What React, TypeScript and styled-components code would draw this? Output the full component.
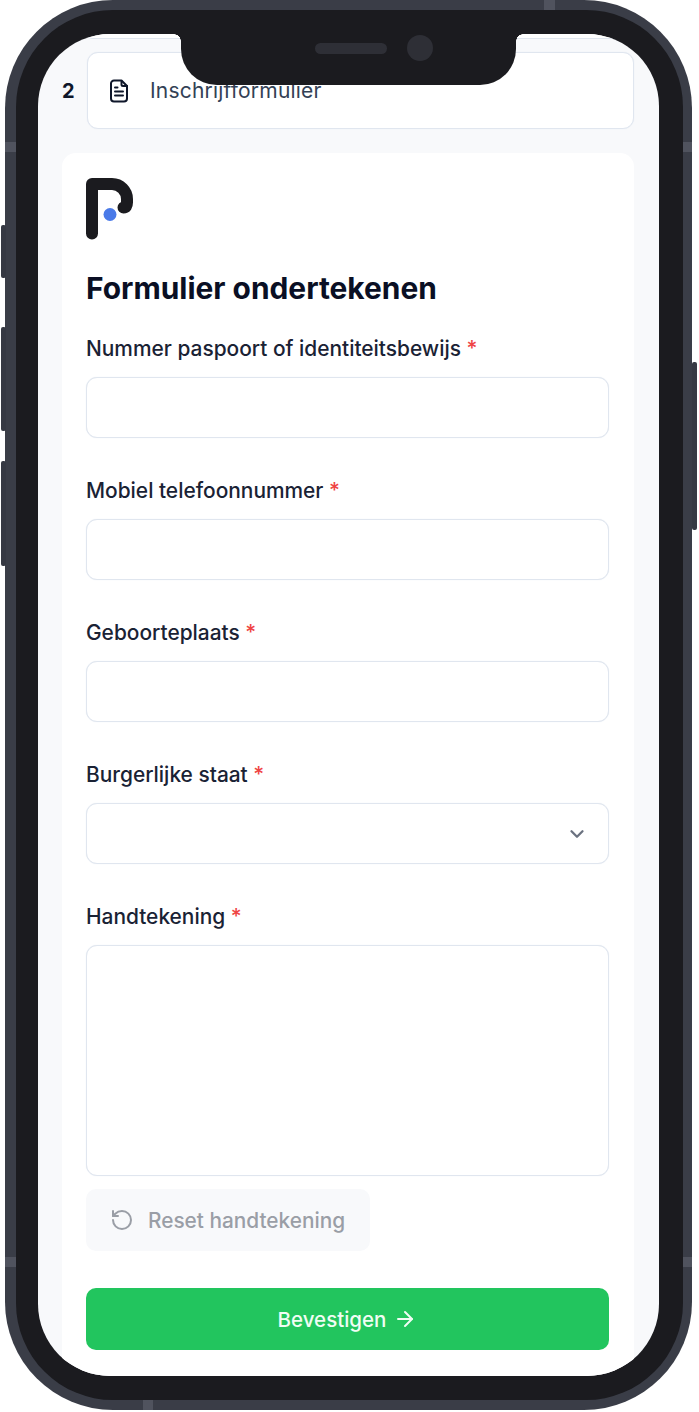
import React from "react";
import styled, { createGlobalStyle } from "styled-components";
import { ArrowRight, ChevronDown, RotateCcw } from "lucide-react";

const Global = createGlobalStyle`
  html, body { margin: 0; padding: 0; background: #fff; }
  body { font-family: "Inter", "Noto Sans", sans-serif; }
  * { box-sizing: border-box; }
`;

const Stage = styled.div`
  width: 699px;
  height: 1412px;
  padding: 0 7px 2px 5px;
  overflow: hidden;
`;
const Phone = styled.div`
  position: relative;
  height: 1410px;
  padding: 10px 9px 10px 11px;
  border-radius: 108px;
  background: #3a3d47;
`;
const SideButton = styled.span<{ $side: "left" | "right"; $top: number; $height: number }>`
  position: absolute;
  ${(p) => (p.$side === "left" ? "left: -4px;" : "right: -5px;")}
  top: ${(p) => p.$top}px;
  width: 5px;
  height: ${(p) => p.$height}px;
  border-radius: 2px;
  background: #363943;
`;
const Band = styled.span<{ $pos: string }>`
  position: absolute;
  ${(p) => p.$pos}
  background: #50535e;
`;
const Bezel = styled.div`
  position: relative;
  height: 100%;
  padding: 24px 24px 24px 22px;
  border-radius: 97px;
  background: #1b1b1f;
`;
const Notch = styled.div`
  position: absolute;
  z-index: 2;
  left: 165px;
  top: 24px;
  width: 335px;
  height: 51px;
  display: flex;
  align-items: flex-start;
  justify-content: center;
  gap: 20px;
  padding: 1px 0 0 50px;
  border-radius: 0 0 36px 36px;
  background: #1b1b1f;
  &::before, &::after {
    content: "";
    position: absolute;
    top: 0;
    width: 7px;
    height: 7px;
  }
  &::before {
    left: -7px;
    background: radial-gradient(circle at 0 100%, transparent 6.5px, #1b1b1f 7px);
  }
  &::after {
    right: -7px;
    background: radial-gradient(circle at 100% 100%, transparent 6.5px, #1b1b1f 7px);
  }
`;
const Speaker = styled.span`
  width: 72px;
  height: 11px;
  margin-top: 8px;
  border-radius: 6px;
  background: #2e2f36;
`;
const Camera = styled.span`
  width: 26px;
  height: 26px;
  border-radius: 50%;
  background: #2e2f36;
`;
const Screen = styled.div`
  height: 100%;
  overflow: hidden;
  padding: 0 25px 0 24px;
  border-radius: 72px;
  background: #f8f9fb;
`;
const PreviousEdge = styled.div`
  height: 5px;
  margin: 0 0 13px 25px;
  border: 1px solid #e0e6ef;
  border-top: none;
  border-radius: 0 0 10px 10px;
  background: #fff;
`;
const StepRow = styled.div`
  display: flex;
  align-items: center;
  height: 77px;
  margin-bottom: 24px;
`;
const StepNumber = styled.span`
  width: 25px;
  font-size: 20px;
  font-weight: 700;
  color: #0f172a;
`;
const StepCard = styled.div`
  flex: 1;
  height: 77px;
  display: flex;
  align-items: center;
  gap: 21px;
  padding: 0 0 0 21px;
  border: 1px solid #e0e6ef;
  border-radius: 11px;
  box-shadow: 0 0 1px #e2e8f0;
  background: #fff;
`;
const DocIcon = styled.svg`
  display: block;
  width: 20px;
  height: 24px;
  flex: none;
`;
const StepTitle = styled.span`
  font-size: 21px;
  font-weight: 400;
  letter-spacing: 0.2px;
  color: #334155;
`;
const FormCard = styled.div`
  height: 1300px;
  padding: 25px 25px 0 24px;
  border-radius: 14px 14px 0 0;
  background: #fff;
`;
const Logo = styled.svg`
  display: block;
  width: 48px;
  height: 62px;
`;
const Title = styled.h1`
  margin: 28px 0 27px;
  font-size: 29.9px;
  line-height: 40px;
  font-weight: 700;
  color: #0a0f24;
`;
const Field = styled.div`
  margin-bottom: 39px;
`;
const Label = styled.label`
  display: block;
  height: 42px;
  font-size: 20.9px;
  line-height: 28px;
  font-weight: 500;
  color: #1a2234;
`;
const Star = styled.span`
  color: #ef4444;
`;
const Input = styled.div<{ $height?: number }>`
  height: ${(p) => p.$height ?? 61}px;
  display: flex;
  align-items: center;
  justify-content: flex-end;
  padding-right: 20px;
  border: 1px solid #e0e6ef;
  border-radius: 11px;
  box-shadow: 0 0 1px #e2e8f0;
  background: #fff;
  color: #6b7280;
`;
const ResetButton = styled.button`
  display: flex;
  align-items: center;
  gap: 14px;
  width: 284px;
  height: 62px;
  margin: -26px 0 37px;
  padding: 0 0 0 24px;
  border: none;
  border-radius: 10px;
  background: #f8f9fb;
  font: 500 20.8px "Inter", sans-serif;
  color: #9a9ea6;
`;
const SubmitButton = styled.button`
  display: flex;
  align-items: center;
  justify-content: center;
  gap: 7px;
  width: 100%;
  height: 62px;
  border: none;
  border-radius: 10px;
  background: #22c55e;
  font: 500 20.5px "Inter", sans-serif;
  color: #f0fdf4;
`;

const fields = ["Nummer paspoort of identiteitsbewijs", "Mobiel telefoonnummer", "Geboorteplaats"];

export default function App() {
  return (
    <Stage>
      <Global />
      <Phone>
        <SideButton $side="left" $top={225} $height={53} />
        <SideButton $side="left" $top={327} $height={104} />
        <SideButton $side="left" $top={461} $height={105} />
        <SideButton $side="right" $top={362} $height={168} />
        <Band $pos="left:0;top:142px;width:11px;height:10px;" />
        <Band $pos="right:0;top:142px;width:10px;height:10px;" />
        <Band $pos="left:0;top:1257px;width:11px;height:10px;" />
        <Band $pos="right:0;top:1257px;width:10px;height:10px;" />
        <Band $pos="left:539px;top:0;width:11px;height:10px;" />
        <Band $pos="left:138px;bottom:0;width:10px;height:10px;" />
        <Bezel>
          <Notch>
            <Speaker />
            <Camera />
          </Notch>
          <Screen>
            <PreviousEdge />
            <StepRow>
              <StepNumber>2</StepNumber>
              <StepCard>
                <DocIcon viewBox="0 0 20 24" fill="none" stroke="#0f172a" strokeWidth="2" strokeLinecap="round" strokeLinejoin="round">
                  <path d="M12.5 1.5H5a3 3 0 0 0-3 3v15a3 3 0 0 0 3 3h10a3 3 0 0 0 3-3V7z" />
                  <path d="M12.5 2v3.5a1.5 1.5 0 0 0 1.5 1.5h4" />
                  <path d="M6 8.5h2.5M6 12.5h8M6 16.5h8" />
                </DocIcon>
                <StepTitle>Inschrijfformulier</StepTitle>
              </StepCard>
            </StepRow>
            <FormCard>
              <Logo viewBox="0 0 48 62">
                <path d="M6 55.5V6h20a15 15 0 0 1 15 15v3.5q0 5-3.5 5" fill="none" stroke="#1b1b1f" strokeWidth="12" strokeLinecap="round" strokeLinejoin="round" />
                <circle cx="24" cy="36.5" r="6.5" fill="#4a7ae8" />
              </Logo>
              <Title>Formulier ondertekenen</Title>
              {fields.map((f) => (
                <Field key={f}>
                  <Label>{f} <Star>*</Star></Label>
                  <Input />
                </Field>
              ))}
              <Field>
                <Label>Burgerlijke staat <Star>*</Star></Label>
                <Input><ChevronDown size={22} strokeWidth={2.5} /></Input>
              </Field>
              <Field>
                <Label>Handtekening <Star>*</Star></Label>
                <Input $height={231} />
              </Field>
              <ResetButton><RotateCcw size={24} strokeWidth={2} />Reset handtekening</ResetButton>
              <SubmitButton>Bevestigen <ArrowRight size={24} strokeWidth={2} /></SubmitButton>
            </FormCard>
          </Screen>
        </Bezel>
      </Phone>
    </Stage>
  );
}
